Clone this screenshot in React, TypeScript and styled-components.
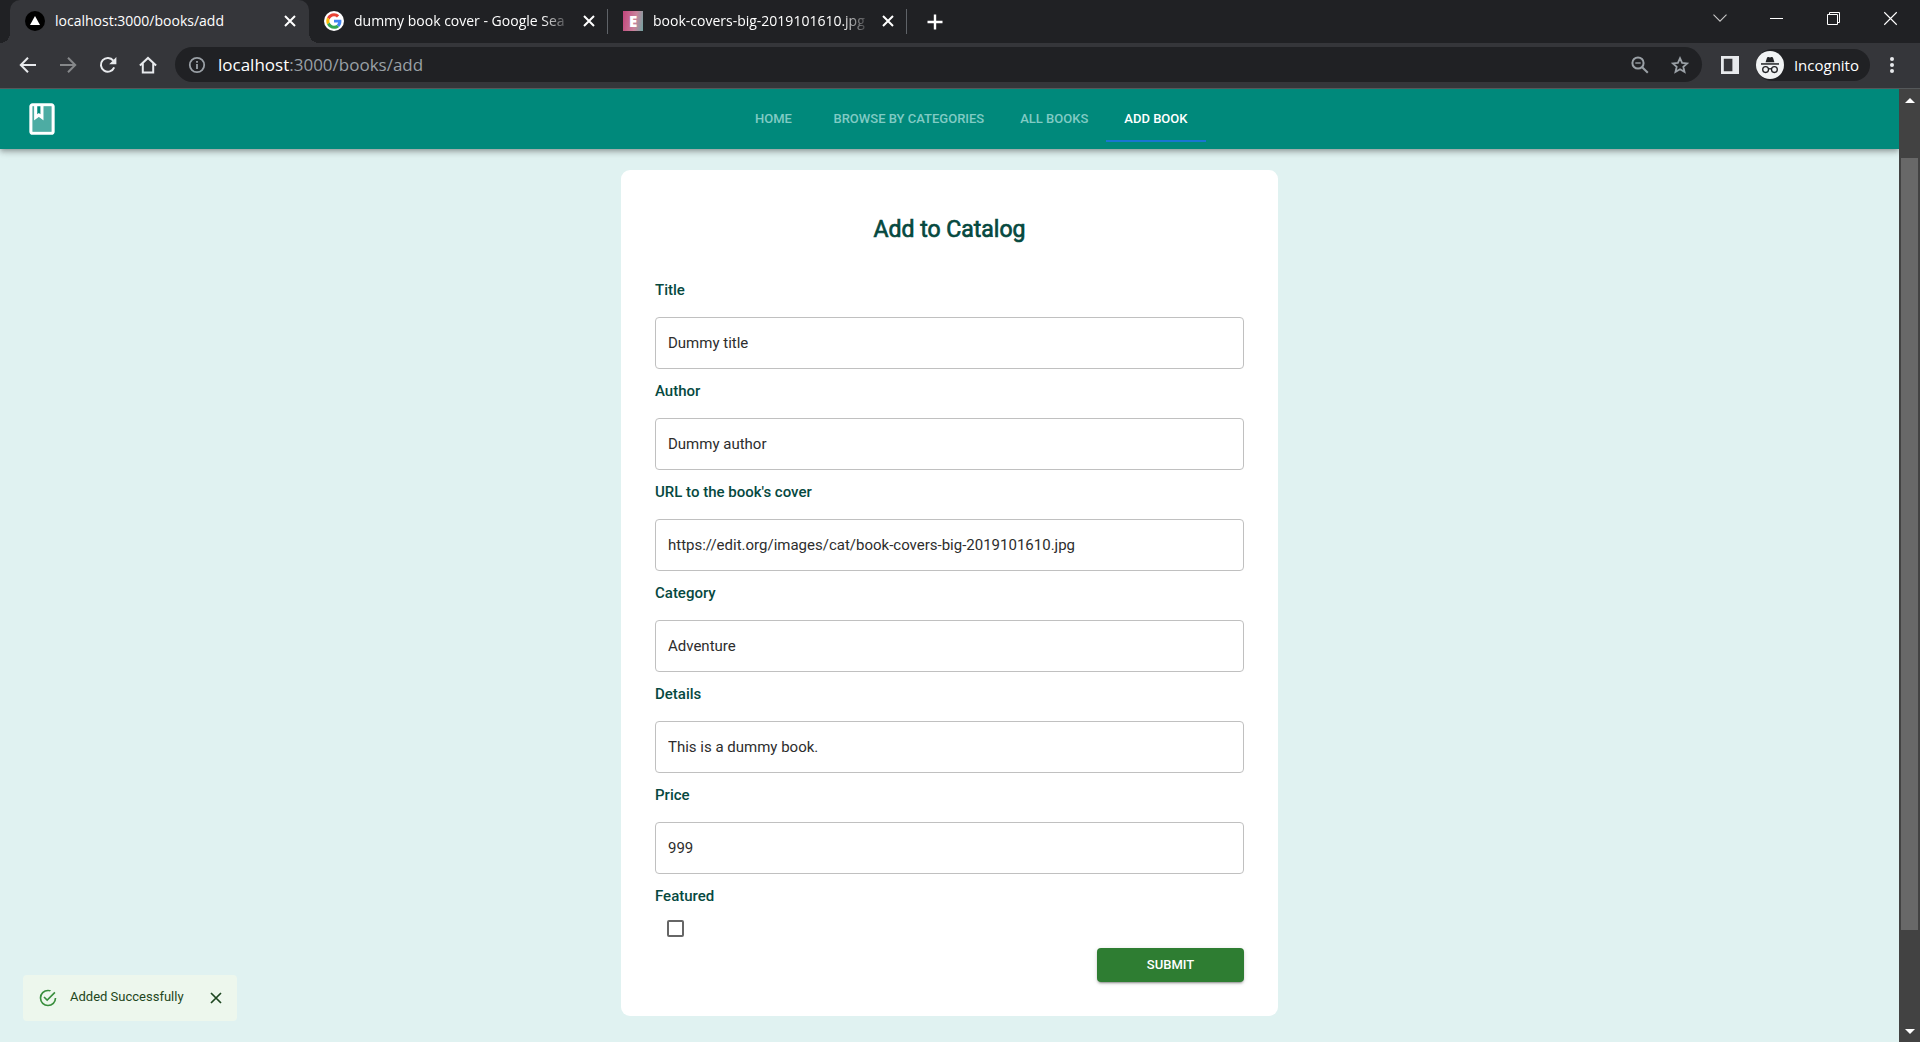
import React, { useState } from "react";
import styled, { createGlobalStyle, css } from "styled-components";

const GlobalStyle = createGlobalStyle`
  *, *::before, *::after { box-sizing: border-box; }
  body { margin: 0; font-family: Roboto, "Liberation Sans", sans-serif; }
  button, input { font: inherit; margin: 0; }
  button { border: 0; padding: 0; background: none; color: inherit; cursor: pointer; }
  svg { display: block; flex: none; }
`;

const chromeFont = css`
  font-family: "Open Sans", "Noto Sans", sans-serif;
`;

const Window = styled.div`
  display: flex;
  flex-direction: column;
  height: 100vh;
  overflow: hidden;
`;

/* ---------- browser tabs ---------- */

const TabStrip = styled.div`
  ${chromeFont}
  display: flex;
  align-items: stretch;
  height: 43px;
  padding: 0 1px 0 10px;
  background: #202124;
  color: #fff;
`;

const BrowserTab = styled.div<{ $active?: boolean; $divider?: boolean }>`
  position: relative;
  display: flex;
  align-items: center;
  gap: 10px;
  width: 299px;
  padding: 0 12px 2px 15px;
  ${(p) =>
    p.$active &&
    css`
      background: #35363a;
      border-radius: 10px 10px 0 0;
      &::before,
      &::after {
        content: "";
        position: absolute;
        bottom: 0;
        width: 10px;
        height: 10px;
      }
      &::before {
        left: -10px;
        background: radial-gradient(circle at 0 0, transparent 10px, #35363a 10px);
      }
      &::after {
        right: -10px;
        background: radial-gradient(circle at 100% 0, transparent 10px, #35363a 10px);
      }
    `}
  ${(p) =>
    p.$divider &&
    css`
      &::after {
        content: "";
        position: absolute;
        right: 0;
        top: 9px;
        width: 1px;
        height: 25px;
        background: #5f6368;
      }
    `}
`;

const TabTitle = styled.button<{ $fade?: boolean }>`
  flex: 1;
  min-width: 0;
  font-size: 14px;
  line-height: 20px;
  text-align: left;
  white-space: nowrap;
  ${(p) =>
    p.$fade &&
    css`
      mask-image: linear-gradient(to right, #000 calc(100% - 30px), transparent);
    `}
`;

const TabClose = styled.button`
  display: grid;
  place-items: center;
  width: 14px;
  height: 20px;
`;

const NewTab = styled.button`
  display: grid;
  place-items: center;
  width: 56px;
`;

const WindowControls = styled.div`
  display: flex;
  margin-left: auto;
`;

const WindowButton = styled.button`
  display: grid;
  place-items: center;
  width: 57px;
  height: 36px;
`;

/* ---------- browser toolbar ---------- */

const Toolbar = styled.div`
  ${chromeFont}
  display: flex;
  align-items: center;
  height: 46px;
  padding: 0 8px 2px;
  background: #35363a;
  border-bottom: 1px solid #55585a;
  color: #e8eaed;
`;

const ToolButton = styled.button<{ $dim?: boolean }>`
  display: grid;
  place-items: center;
  width: 40px;
  height: 34px;
  color: ${(p) => (p.$dim ? "#86888a" : "inherit")};
`;

const AddressBar = styled.div`
  display: flex;
  flex: 1;
  align-items: center;
  height: 35px;
  margin: 0 8px 0 7px;
  padding: 0 2px 0 12px;
  border-radius: 18px;
  background: #202124;
  color: #9aa0a6;
`;

const Url = styled.div`
  flex: 1;
  margin-left: 11px;
  font-size: 17px;
  line-height: 24px;
  outline: none;
`;

const Host = styled.span`
  color: #fff;
`;

const IncognitoPill = styled.button`
  display: flex;
  align-items: center;
  gap: 10px;
  height: 32px;
  margin: 0 2px 0 6px;
  padding: 0 11px 0 0;
  border-radius: 16px;
  background: #202124;
  font-size: 15px;
  line-height: 20px;
  color: #fff;
`;

/* ---------- page ---------- */

const Viewport = styled.div`
  display: flex;
  flex: 1;
  min-height: 0;
`;

const Page = styled.div`
  display: flex;
  flex-direction: column;
  flex: 1;
  overflow: hidden;
  background: #e0f2f1;
`;

const Header = styled.header`
  position: relative;
  display: flex;
  align-items: center;
  min-height: 60px;
  padding: 0 23px;
  background: #00897b;
  box-shadow: 0 2px 4px -1px rgba(0, 0, 0, 0.2), 0 4px 5px 0 rgba(0, 0, 0, 0.14),
    0 1px 10px 0 rgba(0, 0, 0, 0.12);
`;

const Logo = styled.a`
  color: #fff;
`;

const Nav = styled.nav`
  display: flex;
  flex: 1;
  justify-content: center;
`;

const NavLink = styled.a<{ $current?: boolean }>`
  display: flex;
  align-items: center;
  justify-content: center;
  min-width: 84px;
  height: 46px;
  padding: 2px 18px 0;
  border-bottom: 2px solid ${(p) => (p.$current ? "#1976d2" : "transparent")};
  color: ${(p) => (p.$current ? "#fff" : "#80cbc4")};
  font-size: 13px;
  font-weight: 500;
  line-height: 16px;
  text-decoration: none;
  text-transform: uppercase;
  white-space: nowrap;
`;

const Form = styled.form`
  display: flex;
  flex-direction: column;
  width: 100%;
  max-width: 657px;
  margin: 21px auto 0;
  padding: 44px 34px 34px;
  border-radius: 9px;
  background: #fff;
`;

const Heading = styled.h1`
  margin: 0 0 22px;
  color: #06493f;
  font-size: 23px;
  font-weight: 400;
  line-height: 32px;
  text-align: center;
  -webkit-text-stroke: 0.7px currentColor;
`;

const FieldLabel = styled.label`
  margin: 12px 0 17px;
  color: #06493f;
  font-size: 15px;
  font-weight: 500;
  line-height: 20px;
`;

const TextInput = styled.input`
  width: 100%;
  height: 52px;
  padding: 0 12px;
  border: 1px solid #c0c0c0;
  border-radius: 4px;
  background: #fff;
  color: #2d2d2d;
  font-size: 15px;
  outline: none;
`;

const CheckLabel = styled(FieldLabel)`
  margin-bottom: 14px;
`;

const Checkbox = styled.input`
  appearance: none;
  align-self: flex-start;
  width: 17px;
  height: 17px;
  margin-left: 12px;
  border: 2px solid #666;
  border-radius: 2px;
  &:checked {
    background: #2e7d32;
  }
`;

const Submit = styled.button`
  align-self: flex-end;
  width: 147px;
  height: 34px;
  margin-top: 11px;
  padding-bottom: 2px;
  border-radius: 4px;
  background: #2e7d32;
  box-shadow: 0 3px 1px -2px rgba(0, 0, 0, 0.2), 0 2px 2px 0 rgba(0, 0, 0, 0.14),
    0 1px 5px 0 rgba(0, 0, 0, 0.12);
  color: #fff;
  font-size: 13px;
  font-weight: 500;
  text-transform: uppercase;
`;

const Toast = styled.div`
  position: fixed;
  left: 23px;
  bottom: 21px;
  display: flex;
  align-items: center;
  height: 46px;
  padding: 0 15px;
  border-radius: 4px;
  background: #edf7ed;
  color: #1e4620;
`;

const ToastText = styled.span`
  margin: 0 26px 0 12px;
  padding-bottom: 2px;
  font-size: 13px;
  line-height: 18px;
`;

/* ---------- page scrollbar ---------- */

const Scrollbar = styled.div`
  display: flex;
  flex-direction: column;
  width: 21px;
  background: #424242;
`;

const ScrollArrow = styled.button`
  display: grid;
  place-items: center;
  height: 22px;
  color: #fff;
`;

const ScrollGap = styled.div<{ $share: number }>`
  flex: ${(p) => p.$share};
`;

const ScrollThumb = styled.div`
  flex: 772;
  margin: 0 2px;
  background: #686868;
`;

/* ---------- icons ---------- */

const Cross = ({ size, stroke = 2 }: { size: number; stroke?: number }) => (
  <svg width={size} height={size} viewBox="0 0 12 12" fill="none" stroke="currentColor" strokeWidth={stroke}>
    <path d="M1 1l10 10M11 1L1 11" />
  </svg>
);

const NextFavicon = () => (
  <svg width="20" height="20" viewBox="0 0 20 20">
    <circle cx="10" cy="10" r="10" fill="#000" />
    <path d="M10 5l5 9H5z" fill="#fff" />
  </svg>
);

const GoogleFavicon = () => (
  <svg width="20" height="20" viewBox="0 0 40 40">
    <circle cx="20" cy="20" r="20" fill="#fff" />
    <g transform="translate(4.5 4.5) scale(.646)">
      <path fill="#EA4335" d="M24 9.5c3.54 0 6.71 1.22 9.21 3.6l6.85-6.85C35.9 2.38 30.47 0 24 0 14.62 0 6.51 5.38 2.56 13.22l7.98 6.19C12.43 13.72 17.74 9.5 24 9.5z" />
      <path fill="#4285F4" d="M46.98 24.55c0-1.57-.15-3.09-.38-4.55H24v9.02h12.94c-.58 2.96-2.26 5.48-4.78 7.18l7.73 6c4.51-4.18 7.09-10.36 7.09-17.65z" />
      <path fill="#FBBC05" d="M10.53 28.59c-.48-1.45-.76-2.99-.76-4.59s.27-3.14.76-4.59l-7.98-6.19C.92 16.46 0 20.12 0 24s.92 7.54 2.56 10.78l7.97-6.19z" />
      <path fill="#34A853" d="M24 48c6.48 0 11.93-2.13 15.89-5.81l-7.73-6c-2.15 1.45-4.92 2.3-8.16 2.3-6.26 0-11.57-4.22-13.47-9.91l-7.98 6.19C6.51 42.62 14.62 48 24 48z" />
    </g>
  </svg>
);

const EditFavicon = styled.span`
  display: grid;
  place-items: center;
  flex: none;
  width: 20px;
  height: 20px;
  background: linear-gradient(100deg, #c2447c, #c9839c 60%, #6fa3a0);
  color: #fff;
  font-size: 15px;
  font-weight: 800;
  line-height: 20px;
`;

const BackIcon = ({ flip }: { flip?: boolean }) => (
  <svg width="18" height="18" viewBox="0 0 18 18" fill="none" stroke="currentColor" strokeWidth="2" transform={flip ? "scale(-1 1)" : undefined}>
    <path d="M17 9H2.5M9 1.8L1.8 9 9 16.2" />
  </svg>
);

const ReloadIcon = () => (
  <svg width="18" height="18" viewBox="0 0 18 18">
    <path d="M15.2 11.4A6.9 6.9 0 1 1 14.3 4.6" fill="none" stroke="currentColor" strokeWidth="2" />
    <path d="M17.4 1v7.2h-7.2z" fill="currentColor" />
  </svg>
);

const HomeIcon = () => (
  <svg width="18" height="18" viewBox="0 0 18 18" fill="none" stroke="currentColor" strokeWidth="2">
    <path d="M.9 9.4L9 1.9l8.1 7.5M3.8 7.6v8.8h10.4V7.6" />
  </svg>
);

const InfoIcon = () => (
  <svg width="20" height="20" viewBox="0 0 20 20" fill="none" stroke="currentColor" strokeWidth="1.8">
    <circle cx="10" cy="10" r="7.2" />
    <path d="M10 9v5M10 6v1.8" />
  </svg>
);

const ZoomOutIcon = () => (
  <svg width="18" height="18" viewBox="0 0 18 18" fill="none" stroke="currentColor" strokeWidth="2">
    <circle cx="7" cy="7" r="5.6" />
    <path d="M11.2 11.2l5.6 5.6" />
    <path d="M4.3 7h5.4" strokeWidth="1.4" />
  </svg>
);

const StarIcon = () => (
  <svg width="18" height="18" viewBox="0 0 18 18" fill="none" stroke="currentColor" strokeWidth="1.8">
    <path d="M9 2.200l2.100 4.700 5.100.5-3.900 3.400 1.200 5L9 13.200l-4.500 2.600 1.200-5L1.800 7.400l5.100-.5z" />
  </svg>
);

const SidePanelIcon = () => (
  <svg width="18" height="18" viewBox="0 0 18 18">
    <path fill="currentColor" fillRule="evenodd" d="M0 0h18v18H0zM2.8 2.8v12.4h8.6V2.8z" />
  </svg>
);

const IncognitoIcon = () => (
  <svg width="28" height="28" viewBox="0 0 28 28">
    <circle cx="14" cy="14" r="14" fill="#f1f3f4" />
    <g fill="#202124">
      <path d="M9.6 11.3l1.3-4.4c.2-.8.9-1.1 1.6-.9l1.5.4 1.5-.4c.7-.2 1.4.1 1.6.9l1.3 4.4z" />
      <path d="M5 12.2h18v1.5H5z" />
    </g>
    <g fill="none" stroke="#202124" strokeWidth="1.3">
      <circle cx="9.6" cy="18.6" r="2.9" />
      <circle cx="18.4" cy="18.6" r="2.9" />
      <path d="M12.4 18.2c1-.7 2.2-.7 3.2 0" />
    </g>
  </svg>
);

const MenuDots = () => (
  <svg width="4" height="18" viewBox="0 0 4 18" fill="currentColor">
    <circle cx="2" cy="3" r="2" />
    <circle cx="2" cy="9" r="2" />
    <circle cx="2" cy="15" r="2" />
  </svg>
);

const BookLogo = () => (
  <svg width="38" height="38" viewBox="0 0 24 24" fill="currentColor">
    <path opacity=".3" d="M13 4v9l-3-2.250L7 13V4H6v16h12V4z" />
    <path d="M18 2H6c-1.100 0-2 .9-2 2v16c0 1.100.9 2 2 2h12c1.100 0 2-.9 2-2V4c0-1.100-.9-2-2-2zM9 4h2v5l-1-.75L9 9V4zm9 16H6V4h1v9l3-2.250L13 13V4h5v16z" />
  </svg>
);

const SuccessIcon = () => (
  <svg width="20" height="20" viewBox="0 0 24 24" fill="#388e3c">
    <path d="M20 12a8 8 0 1 1-8-8c.76 0 1.500.11 2.200.31l1.570-1.570A9.822 9.822 0 0 0 12 2a10 10 0 1 0 10 10h-2M7.910 10.080L6.500 11.500 11 16 21 6l-1.410-1.420L11 13.170l-3.090-3.090z" />
  </svg>
);

/* ---------- data ---------- */

const navItems = ["Home", "Browse by categories", "All books", "Add book"];

const fields = [
  { id: "title", label: "Title", value: "Dummy title" },
  { id: "author", label: "Author", value: "Dummy author" },
  { id: "cover", label: "URL to the book's cover", value: "https://edit.org/images/cat/book-covers-big-2019101610.jpg" },
  { id: "category", label: "Category", value: "Adventure" },
  { id: "details", label: "Details", value: "This is a dummy book." },
  { id: "price", label: "Price", value: "999" },
];

export default function App() {
  const [toastOpen, setToastOpen] = useState(true);

  return (
    <Window>
      <GlobalStyle />
      <TabStrip>
        <BrowserTab $active>
          <NextFavicon />
          <TabTitle>localhost:3000/books/add</TabTitle>
          <TabClose aria-label="Close tab"><Cross size={12} /></TabClose>
        </BrowserTab>
        <BrowserTab $divider>
          <GoogleFavicon />
          <TabTitle $fade>dummy book cover - Google Sea</TabTitle>
          <TabClose aria-label="Close tab"><Cross size={12} /></TabClose>
        </BrowserTab>
        <BrowserTab $divider>
          <EditFavicon>E</EditFavicon>
          <TabTitle $fade>book-covers-big-2019101610.jpg</TabTitle>
          <TabClose aria-label="Close tab"><Cross size={12} /></TabClose>
        </BrowserTab>
        <NewTab aria-label="New tab">
          <svg width="16" height="16" viewBox="0 0 16 16" stroke="currentColor" strokeWidth="2.4">
            <path d="M8 .5v15M.5 8h15" />
          </svg>
        </NewTab>
        <WindowControls>
          <WindowButton aria-label="Search tabs">
            <svg width="14" height="8" viewBox="0 0 14 8" fill="none" stroke="#c8c8c8" strokeWidth="1.1">
              <path d="M.5 .7L7 7.200 13.500.7" />
            </svg>
          </WindowButton>
          <WindowButton aria-label="Minimize">
            <svg width="13" height="1" viewBox="0 0 13 1"><path d="M0 0h13v1H0z" fill="#fff" /></svg>
          </WindowButton>
          <WindowButton aria-label="Restore">
            <svg width="13" height="13" viewBox="0 0 13 13" fill="none" stroke="#fff">
              <path d="M.5 2.500h10v10H.5zM2.500 2.500v-2h10v10h-2" />
            </svg>
          </WindowButton>
          <WindowButton aria-label="Close window"><Cross size={15} stroke={0.9} /></WindowButton>
        </WindowControls>
      </TabStrip>

      <Toolbar>
        <ToolButton aria-label="Back"><BackIcon /></ToolButton>
        <ToolButton aria-label="Forward" $dim><BackIcon flip /></ToolButton>
        <ToolButton aria-label="Reload"><ReloadIcon /></ToolButton>
        <ToolButton aria-label="Home"><HomeIcon /></ToolButton>
        <AddressBar>
          <InfoIcon />
          <Url role="textbox" aria-label="Address" contentEditable suppressContentEditableWarning spellCheck={false}>
            <Host>localhost</Host>:3000/books/add
          </Url>
          <ToolButton aria-label="Zoom level"><ZoomOutIcon /></ToolButton>
          <ToolButton aria-label="Bookmark this page"><StarIcon /></ToolButton>
        </AddressBar>
        <ToolButton aria-label="Side panel"><SidePanelIcon /></ToolButton>
        <IncognitoPill>
          <IncognitoIcon />
          Incognito
        </IncognitoPill>
        <ToolButton aria-label="Menu"><MenuDots /></ToolButton>
      </Toolbar>

      <Viewport>
        <Page>
          <Header>
            <Logo href="#" aria-label="Bookstore"><BookLogo /></Logo>
            <Nav>
              {navItems.map((item) => (
                <NavLink key={item} href="#" $current={item === "Add book"}>{item}</NavLink>
              ))}
            </Nav>
          </Header>
          <main>
            <Form onSubmit={(e) => e.preventDefault()}>
              <Heading>Add to Catalog</Heading>
              {fields.map((f) => (
                <React.Fragment key={f.id}>
                  <FieldLabel htmlFor={f.id}>{f.label}</FieldLabel>
                  <TextInput id={f.id} type="text" defaultValue={f.value} />
                </React.Fragment>
              ))}
              <CheckLabel htmlFor="featured">Featured</CheckLabel>
              <Checkbox id="featured" type="checkbox" />
              <Submit type="submit">Submit</Submit>
            </Form>
          </main>
          {toastOpen && (
            <Toast role="alert">
              <SuccessIcon />
              <ToastText>Added Successfully</ToastText>
              <button aria-label="Dismiss" onClick={() => setToastOpen(false)}><Cross size={12} stroke={1.7} /></button>
            </Toast>
          )}
        </Page>
        <Scrollbar>
          <ScrollArrow aria-label="Scroll up">
            <svg width="10" height="5" viewBox="0 0 10 5"><path d="M5 0l5 5H0z" fill="currentColor" /></svg>
          </ScrollArrow>
          <ScrollGap $share={47} />
          <ScrollThumb />
          <ScrollGap $share={90} />
          <ScrollArrow aria-label="Scroll down">
            <svg width="10" height="5" viewBox="0 0 10 5"><path d="M0 0h10L5 5z" fill="currentColor" /></svg>
          </ScrollArrow>
        </Scrollbar>
      </Viewport>
    </Window>
  );
}
